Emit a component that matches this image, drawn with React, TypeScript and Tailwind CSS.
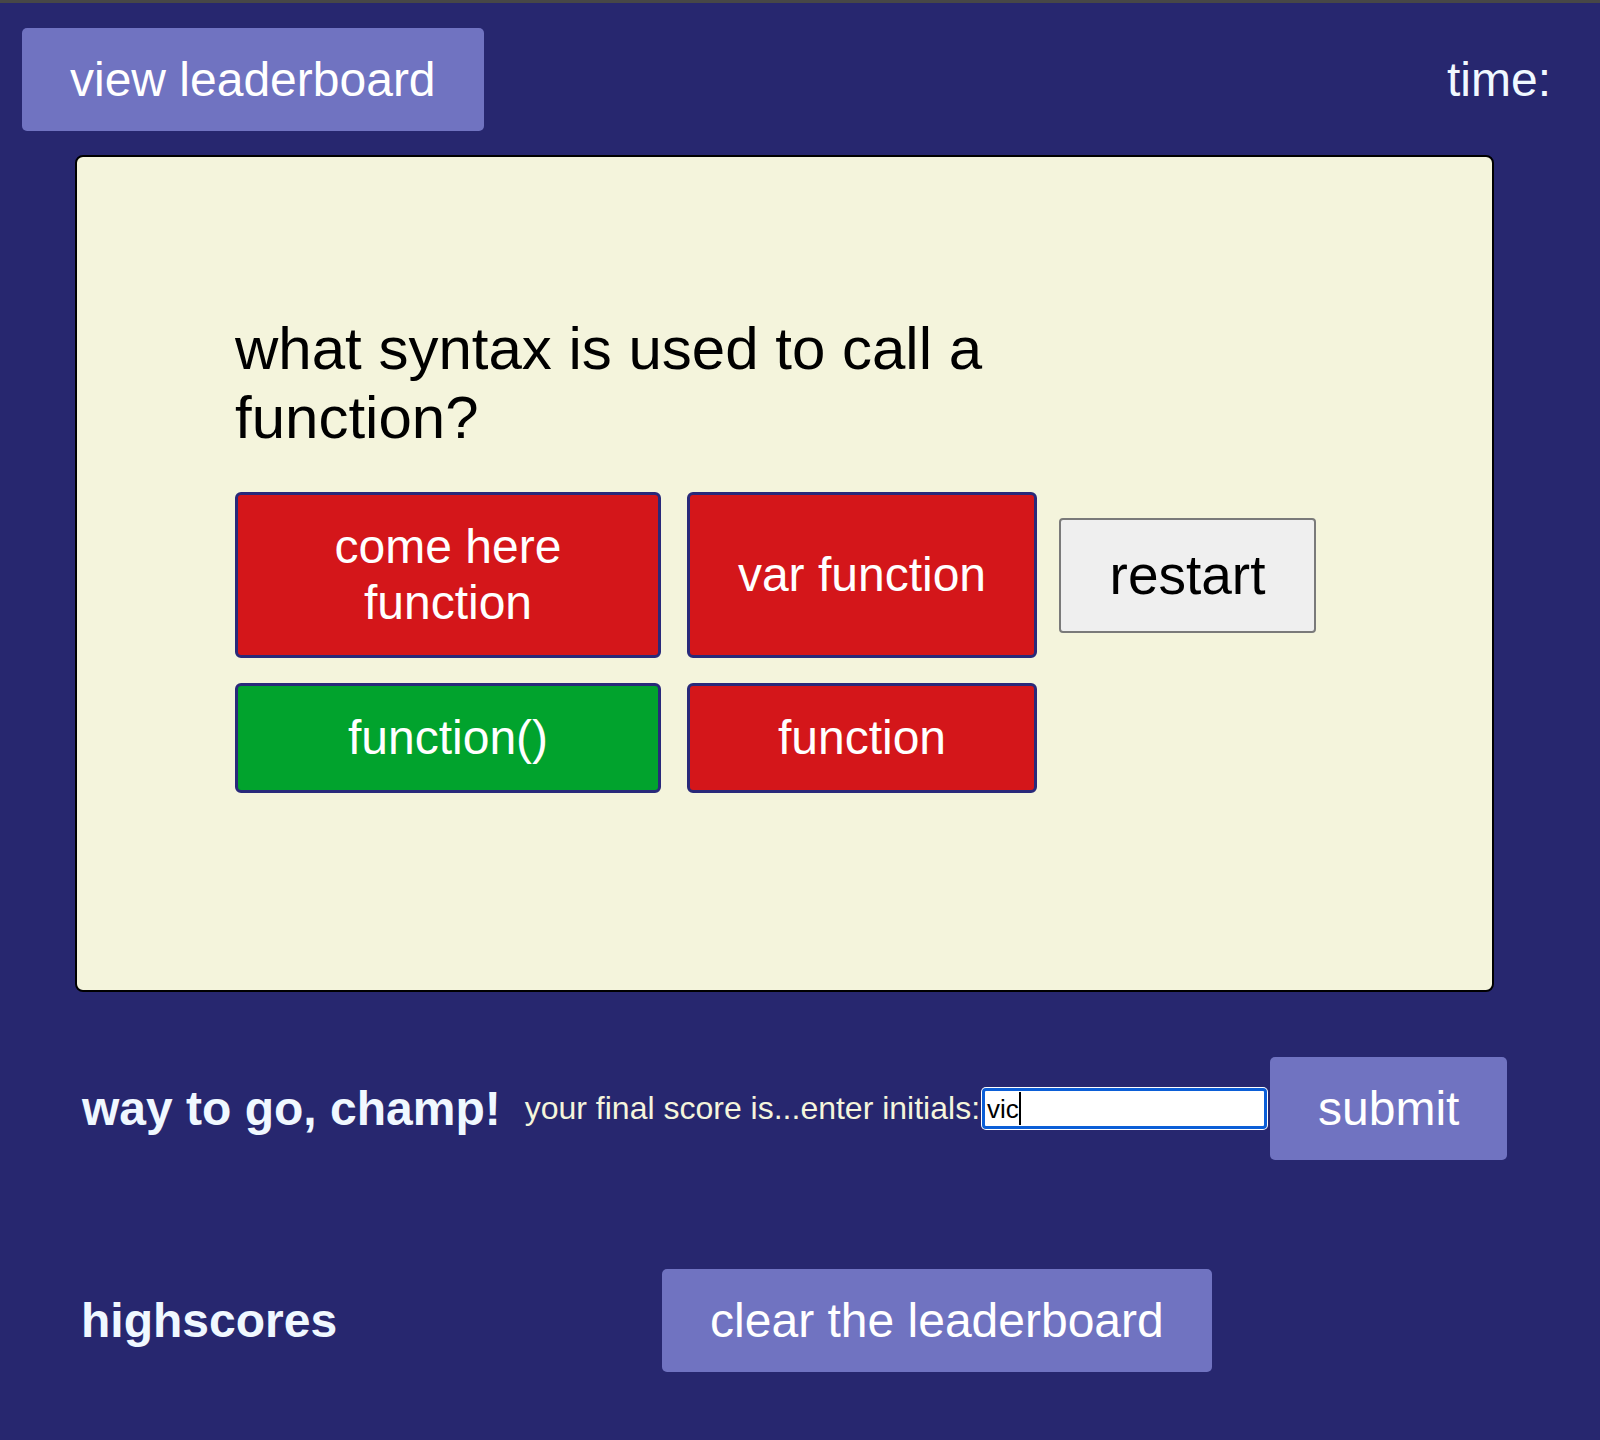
const font = { fontFamily: '"Liberation Sans", Arial, sans-serif' };

function PurpleButton({ label, className = "" }: { label: string; className?: string }) {
  return (
    <button
      className={`shrink-0 rounded-[5px] bg-[#7073c1] px-12 py-6 text-[48px] leading-[55px] text-white ${className}`}
    >
      {label}
    </button>
  );
}

function Answer({ label, color }: { label: string; color: string }) {
  return (
    <button
      className={`${color} rounded-md border-[3px] border-[#29297a] px-4 py-6 text-center text-[48px] leading-[56px] text-white`}
    >
      {label}
    </button>
  );
}

export default function App() {
  return (
    <div className="min-h-screen w-full bg-[#27276f]" style={font}>
      <div className="h-[3px] bg-[#474747]" />

      {/* header */}
      <div className="flex items-center justify-between pl-[22px] pr-[49px] pt-[25px]">
        <PurpleButton label="view leaderboard" />
        <span className="text-[48px] leading-[55px] text-[#f0f8ff]">time:</span>
      </div>

      {/* quiz card */}
      <div className="ml-[75px] mt-[24px] h-[837px] w-[1419px] rounded-lg border-2 border-black bg-[#f4f4dc] pl-[158px] pt-[157px]">
        <h2 className="w-[850px] text-[60px] leading-[69px] text-black">
          what syntax is used to call a function?
        </h2>
        <div className="mt-[40px] grid grid-cols-[426px_350px_253px] justify-start gap-x-[26px] gap-y-[25px]">
          <Answer label="come here function" color="bg-[#d4161a]" />
          <Answer label="var function" color="bg-[#d4161a]" />
          <button className="-ml-[4px] self-center rounded-[4px] border-2 border-[#7a7a7a] bg-[#efefef] py-6 text-[55px] leading-[63px] text-black">
            restart
          </button>
          <Answer label="function()" color="bg-[#01a32d]" />
          <Answer label="function" color="bg-[#d4161a]" />
        </div>
      </div>

      {/* final score */}
      <div className="mt-[65px] flex items-center pl-[82px]">
        <h2 className="text-[48px] font-bold leading-[55px] text-[#f0f8ff]">way to go, champ!</h2>
        <label className="ml-[24px] text-[32px] leading-[37px] text-[#f5f5dc]">
          your final score is...enter initials:
        </label>
        <div className="ml-[2px] flex h-[41px] w-[285px] items-center rounded-[4px] border-[3px] border-[#0b5ed7] bg-white pl-[2px] ring-1 ring-white">
          <span className="text-[26px] leading-[30px] text-black">vic</span>
          <span className="h-[33px] w-[2px] bg-black" />
        </div>
        <PurpleButton label="submit" className="ml-[3px]" />
      </div>

      {/* highscores */}
      <div className="mt-[109px] flex items-center pl-[81px]">
        <h2 className="text-[48px] font-bold leading-[55px] text-[#f0f8ff]">highscores</h2>
        <PurpleButton label="clear the leaderboard" className="ml-[325px]" />
      </div>
    </div>
  );
}
